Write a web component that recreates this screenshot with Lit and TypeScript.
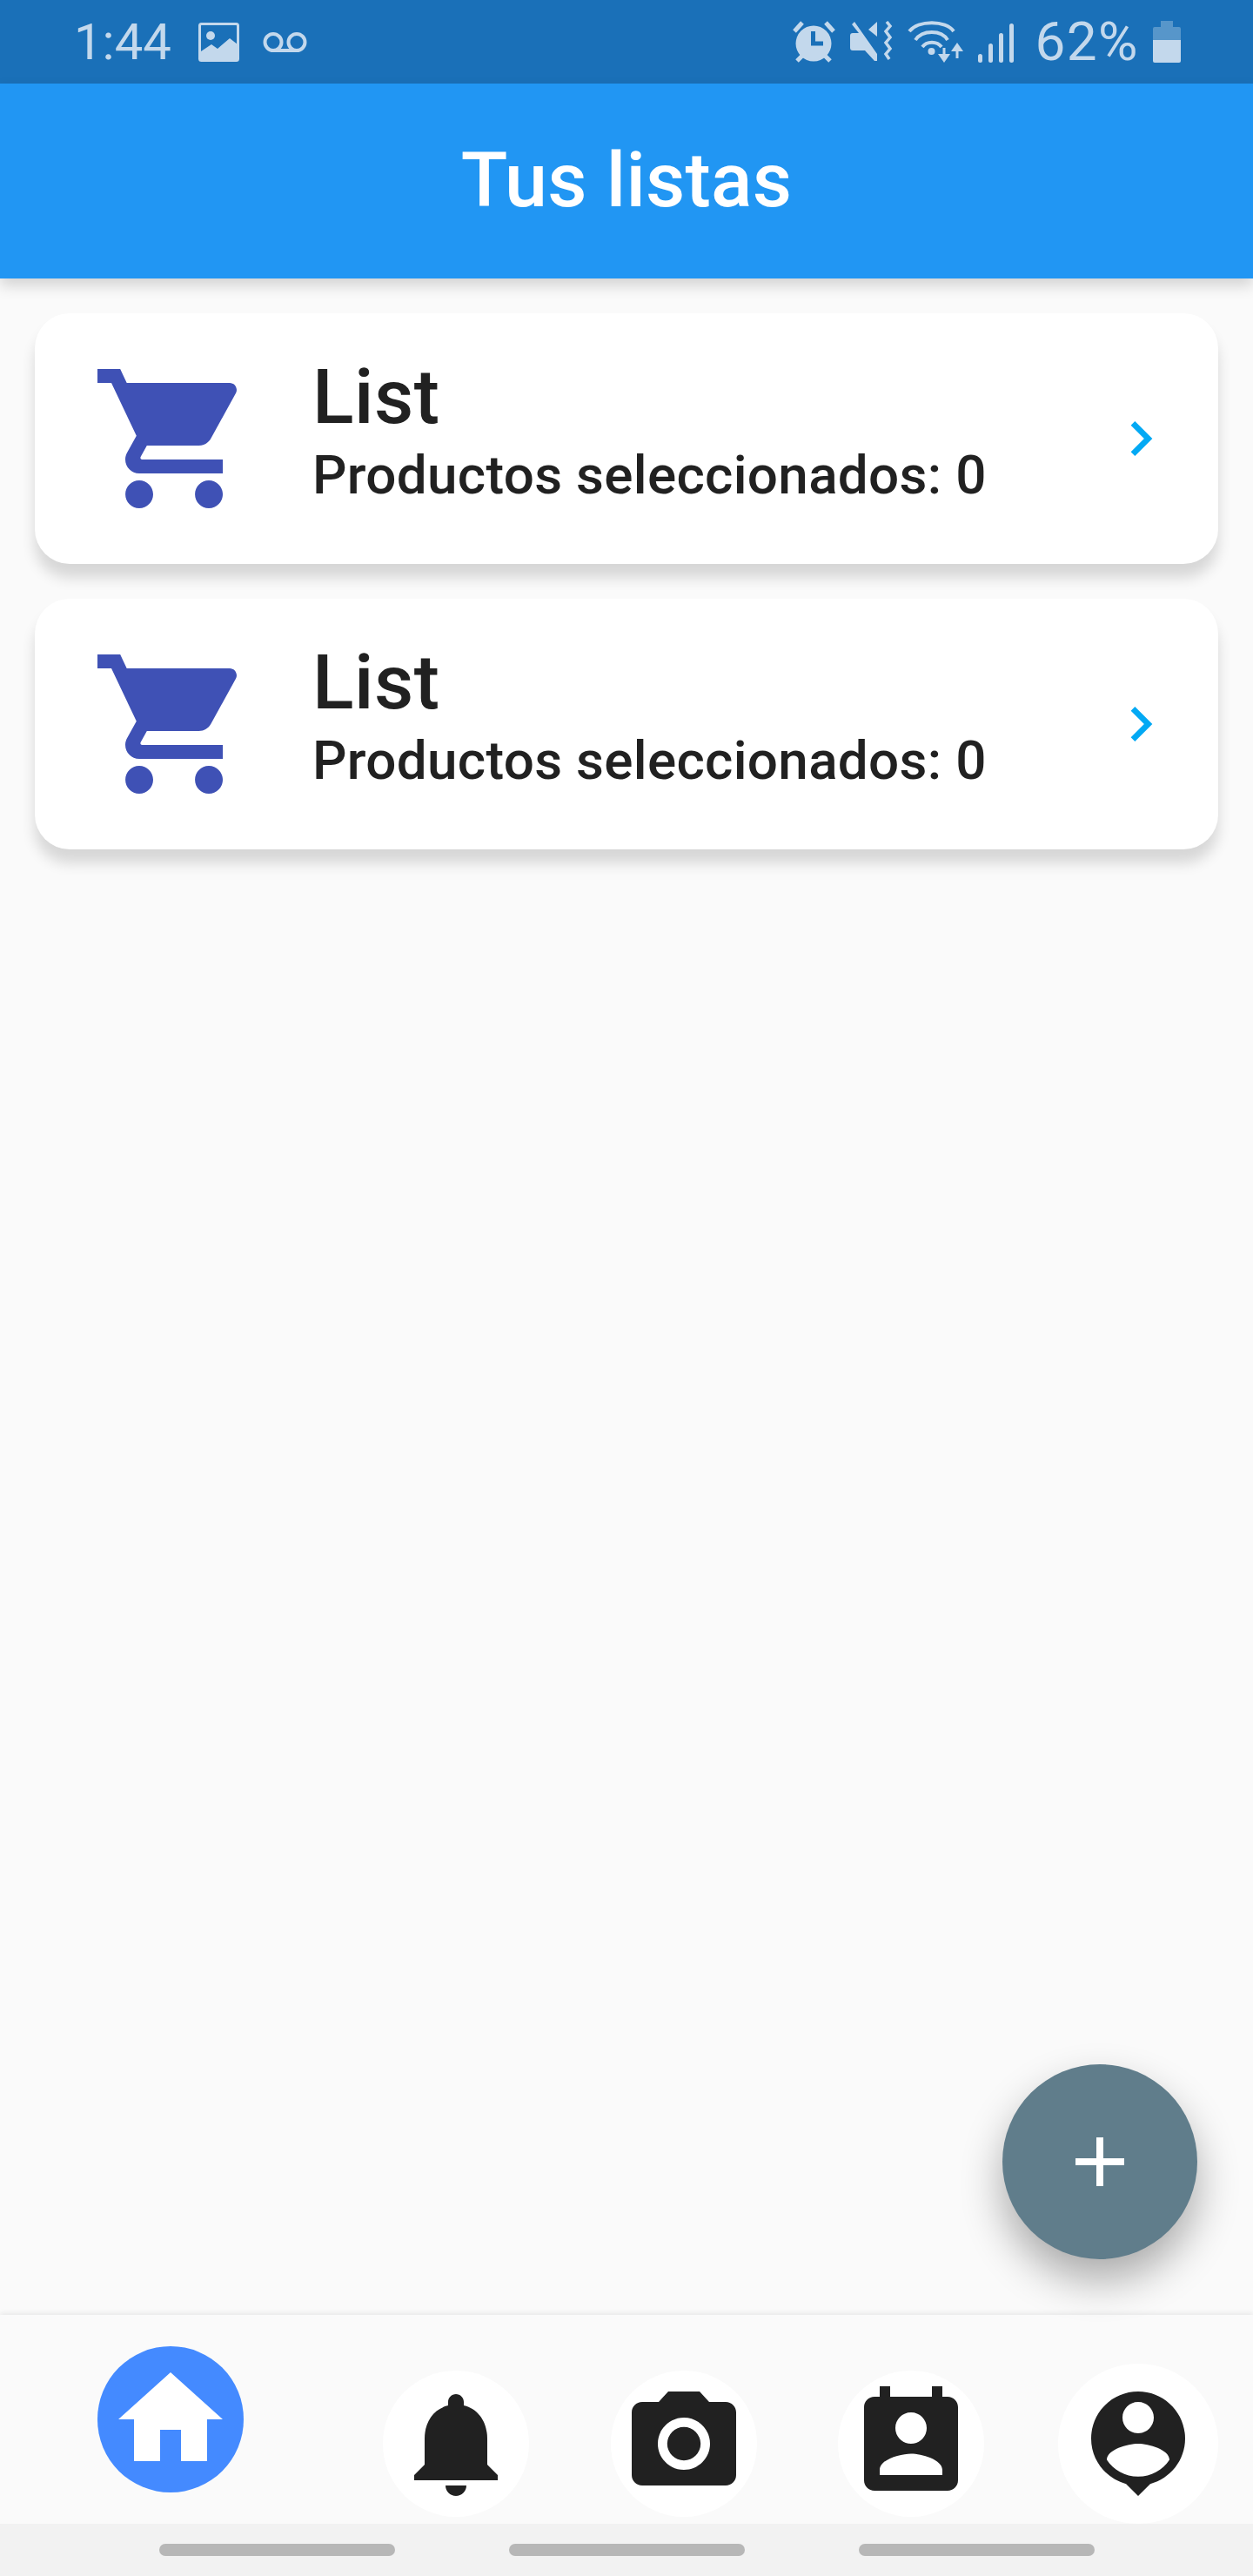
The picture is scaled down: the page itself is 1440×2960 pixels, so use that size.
import {LitElement, html, css, svg} from 'lit';
import {customElement} from 'lit/decorators.js';

const CART =
  'M7 18c-1.1 0-1.99.9-1.99 2S5.9 22 7 22s2-.9 2-2-.9-2-2-2zM1 2v2h2l3.6 7.59-1.35 2.45c-.16.28-.25.61-.25.96 0 1.1.9 2 2 2h12v-2H7.42c-.14 0-.25-.11-.25-.25l.03-.12.9-1.63h7.45c.75 0 1.41-.41 1.75-1.03l3.58-6.49c.08-.14.12-.31.12-.48 0-.55-.45-1-1-1H5.21l-.94-2H1zm16 16c-1.1 0-1.99.9-1.99 2s.89 2 1.99 2 2-.9 2-2-.9-2-2-2z';
const CHEVRON = 'M10 6L8.59 7.41 13.17 12l-4.58 4.59L10 18l6-6z';
const PLUS = 'M19 13h-6v6h-2v-6H5v-2h6V5h2v6h6v2z';

const NAV_ITEMS = [
  {cls: 'home', path: 'M10 20v-6h4v6h5v-8h3L12 3 2 12h3v8z'},
  {
    cls: 'bell',
    path: 'M12 22c1.1 0 2-.9 2-2h-4c0 1.1.89 2 2 2zm6-6v-5c0-3.07-1.64-5.64-4.5-6.32V4c0-.83-.67-1.5-1.5-1.5s-1.5.67-1.5 1.5v.68C7.63 5.36 6 7.92 6 11v5l-2 2v1h16v-1l-2-2z',
  },
  {
    cls: 'camera',
    path: 'M9 2L7.17 4H4c-1.1 0-2 .9-2 2v12c0 1.1.9 2 2 2h16c1.1 0 2-.9 2-2V6c0-1.1-.9-2-2-2h-3.17L15 2H9zm3 15c-2.76 0-5-2.24-5-5s2.24-5 5-5 5 2.24 5 5-2.24 5-5 5zM12 8.8a3.2 3.2 0 1 0 0 6.4 3.2 3.2 0 0 0 0-6.4z',
  },
  {
    cls: 'contact',
    path: 'M19 3h-1V1h-2v2H8V1H6v2H5c-1.11 0-2 .9-2 2v14c0 1.1.89 2 2 2h14c1.1 0 2-.9 2-2V5c0-1.1-.9-2-2-2zm-7 3c1.66 0 3 1.34 3 3s-1.34 3-3 3-3-1.34-3-3 1.34-3 3-3zm6 12H6v-1c0-2 4-3.1 6-3.1s6 1.1 6 3.1v1z',
  },
  {
    cls: 'profile',
    path: 'M12 2c-4.97 0-9 4.03-9 9 0 4.17 2.84 7.67 6.69 8.69L12 22l2.31-2.31C18.16 18.67 21 15.17 21 11c0-4.97-4.03-9-9-9zm0 2c1.66 0 3 1.34 3 3s-1.34 3-3 3-3-1.34-3-3 1.34-3 3-3zm0 14.3c-2.5 0-4.71-1.28-6-3.22.03-1.99 4-3.08 6-3.08 1.99 0 5.97 1.09 6 3.08-1.29 1.94-3.5 3.22-6 3.22z',
  },
];

const LISTS = [
  {name: 'List', count: 0},
  {name: 'List', count: 0},
];

const INK = '#c3d8ec';
const BAR = '#1a70b8';

const galleryIcon = svg`<svg class="s-gallery" width="47" height="45" viewBox="0 0 47 45">
  <rect x="1.5" y="1.5" width="44" height="42" rx="2" fill="none" stroke=${INK} stroke-width="3"/>
  <circle cx="14" cy="15" r="5" fill=${INK}/>
  <path d="M3 33L15 25l7 5 14-12 9 7V44H3z" fill=${INK}/>
</svg>`;

const voicemailIcon = svg`<svg class="s-voicemail" width="51" height="23" viewBox="0 0 51 23">
  <circle cx="12" cy="11.5" r="9.5" fill="none" stroke=${INK} stroke-width="4"/>
  <circle cx="39" cy="11.5" r="9.5" fill="none" stroke=${INK} stroke-width="4"/>
  <rect x="12" y="19" width="27" height="4" fill=${INK}/>
</svg>`;

const alarmIcon = svg`<svg width="51" height="48" viewBox="0 0 51 48">
  <circle cx="25" cy="26" r="20.5" fill=${INK}/>
  <path d="M3 12l9-10M48 12L39 2M6 46l7-7M44 46l-7-7" stroke=${INK} stroke-width="5" fill="none"/>
  <path d="M24.5 12v14H36" stroke=${BAR} stroke-width="5" fill="none"/>
</svg>`;

const muteIcon = svg`<svg width="49" height="48" viewBox="0 0 49 48">
  <path d="M2 4l3-3 26 37v8h-3L17 34H3q-3 0-3-3V17q0-3 3-3h7z" fill=${INK}/>
  <path d="M31 1v17l-10-8z" fill=${INK}/>
  <path d="M42 1l4 5-5 6 5 7-5 6 5 7-5 6 4 6" stroke=${INK} stroke-width="3.5" fill="none"/>
</svg>`;

const wifiIcon = svg`<svg width="66" height="48" viewBox="0 0 66 48">
  <path d="M3 12C13 -1 45 -1 54 12M10 22C18 10 40 10 47 22M18 30C23 23 35 23 40 30" stroke=${INK} stroke-width="4" fill="none"/>
  <circle cx="28.5" cy="35" r="4" fill=${INK}/>
  <path d="M43 31v12" stroke=${INK} stroke-width="3"/>
  <path d="M36 38h14l-7 10z" fill=${INK}/>
  <path d="M58 31v12" stroke=${INK} stroke-width="3"/>
  <path d="M51 35h14l-7-10z" fill=${INK}/>
</svg>`;

const signalIcon = svg`<svg class="s-signal" width="41" height="45" viewBox="0 0 41 45">
  <rect x="0" y="35" width="5" height="10" rx="2.5" fill=${INK}/>
  <rect x="12" y="23" width="5" height="22" rx="2.5" fill=${INK}/>
  <rect x="24" y="11" width="5" height="34" rx="2.5" fill=${INK}/>
  <rect x="36" y="0" width="5" height="45" rx="2.5" fill=${INK}/>
</svg>`;

const batteryIcon = svg`<svg width="32" height="48" viewBox="0 0 32 48">
  <path d="M9 0h14v7h7q2 0 2 2v13H0V9q0-2 2-2h7z" fill="#5796ca"/>
  <path d="M0 22h32v24q0 2-2 2H2q-2 0-2-2z" fill=${INK}/>
</svg>`;

@customElement('app-root')
export class AppRoot extends LitElement {
  static styles = css`
    :host {
      display: block;
      height: 2960px;
      font-family: Roboto, 'Liberation Sans', sans-serif;
      background: #fafafa;
    }

    .screen {
      position: relative;
      height: 100%;
      display: flex;
      flex-direction: column;
      overflow: hidden;
    }

    svg {
      display: block;
      flex: none;
    }

    .status {
      height: 96px;
      flex: none;
      display: flex;
      align-items: center;
      justify-content: space-between;
      padding: 0 83px 0 85px;
      background: #1a70b8;
      color: #c3d8ec;
      font-size: 58px;
      line-height: 96px;
    }

    .status-left,
    .status-right {
      display: flex;
      align-items: center;
    }

    .time {
      width: 143px;
    }

    .s-voicemail {
      margin-left: 27px;
    }

    .s-signal {
      margin-top: 3px;
    }

    .status-right {
      gap: 16px;
    }

    .percent {
      font-size: 62px;
      letter-spacing: 1.5px;
      margin-left: 8px;
    }

    .appbar {
      height: 220px;
      padding-bottom: 4px;
      flex: none;
      display: flex;
      align-items: center;
      justify-content: center;
      background: #2196f3;
      color: #fff;
      font-size: 88px;
      font-weight: 500;
      letter-spacing: 0.2px;
      box-shadow: 0 8px 16px rgba(0, 0, 0, 0.16);
      z-index: 1;
    }

    .content {
      flex: 1;
      display: flex;
      flex-direction: column;
      gap: 40px;
      padding: 40px;
    }

    .card {
      height: 288px;
      display: flex;
      align-items: center;
      padding: 0 49px 0 64px;
      background: #fff;
      border-radius: 40px;
      box-shadow: 0 16px 16px rgba(0, 0, 0, 0.14);
      color: #212121;
    }

    .cart {
      width: 192px;
      height: 192px;
      fill: #3f51b5;
    }

    .card-text {
      flex: 1;
      margin-left: 63px;
      padding-bottom: 21px;
    }

    .card-title {
      font-size: 88px;
      line-height: 100px;
      font-weight: 500;
      letter-spacing: 0.5px;
    }

    .card-sub {
      margin-top: 5px;
      font-size: 62px;
      line-height: 70px;
      font-weight: 500;
      letter-spacing: 0.3px;
    }

    .chevron {
      width: 80px;
      height: 80px;
      fill: #03a9f4;
    }

    .fab {
      position: absolute;
      left: 1152px;
      top: 2372px;
      width: 224px;
      height: 224px;
      display: flex;
      align-items: center;
      justify-content: center;
      border-radius: 50%;
      background: #607d8b;
      box-shadow: 0 24px 48px rgba(0, 0, 0, 0.32);
    }

    .fab svg {
      width: 96px;
      height: 96px;
      fill: #fff;
    }

    .nav {
      height: 240px;
      flex: none;
      display: flex;
      padding: 0 40px 0 112px;
      background: #fafafa;
      box-shadow: 0 -2px 6px rgba(0, 0, 0, 0.08);
    }

    .nav-item {
      flex: none;
      width: 168px;
      height: 168px;
      margin-top: 64px;
      display: flex;
      align-items: center;
      justify-content: center;
      border-radius: 50%;
      background: #fff;
    }

    .nav-item svg {
      width: 144px;
      height: 144px;
      fill: #212121;
    }

    .nav-item.home {
      margin-top: 36px;
      background: #448aff;
    }

    .nav-item.home svg {
      fill: #fff;
    }

    .nav-item.bell {
      margin-left: 160px;
    }

    .nav-item.camera {
      margin-left: 94px;
    }

    .nav-item.contact {
      margin-left: 93px;
    }

    .nav-item.profile {
      width: 184px;
      height: 184px;
      margin-top: 56px;
      margin-left: 85px;
    }

    .sysbar {
      height: 60px;
      flex: none;
      display: flex;
      align-items: center;
      justify-content: center;
      gap: 131px;
      background: #f2f2f2;
    }

    .pill {
      width: 271px;
      height: 14px;
      border-radius: 7px;
      background: #b7b7b7;
    }
  `;

  render() {
    return html`
      <div class="screen">
        <div class="status">
          <div class="status-left">
            <span class="time">1:44</span>
            ${galleryIcon} ${voicemailIcon}
          </div>
          <div class="status-right">
            ${alarmIcon} ${muteIcon} ${wifiIcon} ${signalIcon}
            <span class="percent">62%</span>
            ${batteryIcon}
          </div>
        </div>
        <header class="appbar">Tus listas</header>
        <main class="content">
          ${LISTS.map(
            (list) => html`
              <div class="card">
                <svg class="cart" viewBox="0 0 24 24"><path d=${CART}></path></svg>
                <div class="card-text">
                  <div class="card-title">${list.name}</div>
                  <div class="card-sub">Productos seleccionados: ${list.count}</div>
                </div>
                <svg class="chevron" viewBox="0 0 24 24"><path d=${CHEVRON}></path></svg>
              </div>
            `
          )}
        </main>
        <div class="fab">
          <svg viewBox="0 0 24 24"><path d=${PLUS}></path></svg>
        </div>
        <nav class="nav">
          ${NAV_ITEMS.map(
            (item) => html`
              <div class="nav-item ${item.cls}">
                <svg viewBox="0 0 24 24"><path fill-rule="evenodd" d=${item.path}></path></svg>
              </div>
            `
          )}
        </nav>
        <div class="sysbar">
          <span class="pill"></span>
          <span class="pill"></span>
          <span class="pill"></span>
        </div>
      </div>
    `;
  }
}
